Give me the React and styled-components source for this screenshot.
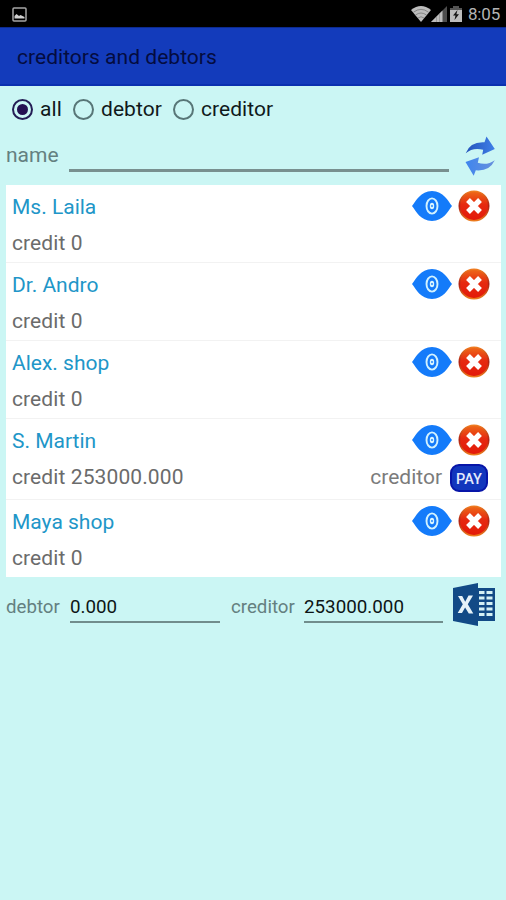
import { useState } from "react";
import styled, { createGlobalStyle } from "styled-components";

const GlobalStyle = createGlobalStyle`
  * {
    box-sizing: border-box;
  }

  body {
    margin: 0;
    background: #cbf6f4;
    font-family: Roboto, "Liberation Sans", sans-serif;
  }

  svg {
    display: block;
    flex: none;
  }
`;

const Screen = styled.div`
  width: 506px;
  min-height: 900px;
  background: #cbf6f4;
`;

const StatusBar = styled.div`
  display: flex;
  align-items: center;
  justify-content: space-between;
  height: 27px;
  padding: 1px 6px 0 12px;
  background: #000;
`;

const StatusIcons = styled.div`
  display: flex;
  align-items: center;
`;

const Clock = styled.span`
  width: 32px;
  margin-left: 6px;
  color: #b4b4b4;
  font-size: 17px;
  letter-spacing: -0.2px;
  line-height: 26px;
  white-space: nowrap;
`;

const AppBar = styled.header`
  height: 59px;
  padding: 1px 17px 0;
  background: #133bbb;
  border-top: 1px solid #0c2a90;
  border-bottom: 2px solid #0a30b0;
`;

const Title = styled.h1`
  margin: 0;
  color: #040c40;
  font-size: 21px;
  font-weight: 400;
  letter-spacing: 0.03px;
  line-height: 57px;
`;

const Filters = styled.div`
  display: flex;
  height: 46px;
  padding: 0 0 0 12px;
`;

const Option = styled.label`
  display: flex;
  align-items: center;
  width: ${(props) => props.$width};
  gap: 7px;
  color: #10191b;
  font-size: 21px;
  letter-spacing: 0.05px;
  white-space: nowrap;
`;

const RadioInput = styled.input`
  appearance: none;
  display: grid;
  place-items: center;
  flex: none;
  width: 21px;
  height: 21px;
  margin: 0;
  border: 2px solid #587677;
  border-radius: 50%;

  &:checked {
    border-color: #241d55;
  }

  &:checked::before {
    content: "";
    width: 11px;
    height: 11px;
    border-radius: 50%;
    background: #241052;
  }
`;

const SearchRow = styled.div`
  display: flex;
  height: 53px;
  padding: 0 11px 0 6px;
`;

const FieldLabel = styled.label`
  width: ${(props) => props.$width};
  color: #648080;
  font-size: ${(props) => props.$size};
  line-height: ${(props) => props.$line};
  white-space: nowrap;
`;

const SearchInput = styled.input`
  width: 380px;
  height: 40px;
  margin: 0 15px 0 0;
  padding: 0;
  border: 0;
  border-bottom: 3px solid #78908f;
  outline: 0;
  background: transparent;
  font: 21px Roboto, sans-serif;
`;

const IconButton = styled.button`
  display: block;
  height: fit-content;
  margin: ${(props) => props.$margin || "0"};
  padding: 0;
  border: 0;
  background: none;
`;

const List = styled.ul`
  margin: 0 5px 0 6px;
  padding: 0;
  list-style: none;
  background: #fff;
`;

const Row = styled.li`
  height: ${(props) => (props.$payable ? "81px" : "78px")};
  padding: 5px 11px 0 6px;
  border-bottom: 1px solid #f2f2f2;

  &:last-child {
    height: 77px;
    border-bottom: 0;
  }
`;

const Line = styled.div`
  display: flex;
  align-items: center;
  height: ${(props) => props.$height};
`;

const Name = styled.span`
  flex: 1;
  padding-top: 1px;
  color: #2196c8;
  font-size: 21px;
`;

const Credit = styled.span`
  flex: 1;
  color: #6b6b6b;
  font-size: 21px;
  letter-spacing: 0.1px;
`;

const Kind = styled.span`
  margin-right: 8px;
  color: #7b7b7b;
  font-size: 21px;
`;

const PayButton = styled.button`
  width: 38px;
  height: 28px;
  margin: 2px 2px 0 0;
  padding: 2px 0 0;
  border: 2px solid #0715a8;
  border-radius: 9px;
  background: #1236bd;
  color: #e4eafc;
  font: 500 14.5px Roboto, sans-serif;
`;

const Totals = styled.footer`
  display: flex;
  height: 56px;
  padding: 6px 10px 0 6px;
`;

const TotalInput = styled.input`
  width: ${(props) => props.$width};
  height: 40px;
  margin: 0 ${(props) => props.$gap} 0 0;
  padding: 10px 0 0;
  border: 0;
  border-bottom: 2px solid #718d8c;
  border-radius: 0;
  outline: 0;
  background: transparent;
  color: #0d1516;
  font: 18.8px Roboto, sans-serif;
`;

const PictureIcon = () => (
  <svg width="15" height="15" viewBox="0 0 15 15">
    <rect x="1" y="1" width="13" height="13" rx="1" fill="none" stroke="#a5a5a5" strokeWidth="1.5" />
    <path d="M2.5 11.5V9l2-2 2.5 2 1.5-1 4 2v1.5z" fill="#d0d0d0" />
  </svg>
);

const WifiIcon = () => (
  <svg width="20" height="16" viewBox="0 0 20 16">
    <path d="M0 4Q10-4 20 4L10 16Z" fill="#bdbdbd" />
    <path d="M2.5 6.2Q10 .5 17.5 6.2M4.5 9Q10 5 15.5 9M7 12Q10 9.5 13 12" fill="none" stroke="#777" strokeWidth="0.8" />
  </svg>
);

const SignalIcon = () => (
  <svg width="17" height="16" viewBox="0 0 17 16">
    <path d="M0 16 16 0V16Z" fill="#4d4d4d" />
    <path d="M0 16 11.5 4.5V16Z" fill="#bdbdbd" />
    <path d="M5.5 11V16M8.5 8V16" stroke="#888" strokeWidth="0.6" />
  </svg>
);

const BatteryIcon = () => (
  <svg width="12" height="16" viewBox="0 0 12 16">
    <path d="M3 0H9V2H12V16H0V2H3Z" fill="#bdbdbd" />
    <path d="M3 0H9V2H12V4H0V2H3Z" fill="#555" />
    <path d="M7.5 4 3 9.5H5.5L4.5 14 9 8.3H6.4Z" fill="#151515" />
  </svg>
);

const RefreshIcon = () => (
  <svg width="30" height="40" viewBox="0 0 30 40">
    <defs>
      <linearGradient id="refreshTop" x1="0" x2="1">
        <stop offset="0" stopColor="#2353bb" />
        <stop offset="1" stopColor="#4080e8" />
      </linearGradient>
      <linearGradient id="refreshBottom" x1="0" x2="1">
        <stop offset="0" stopColor="#3e85ee" />
        <stop offset="1" stopColor="#6991dc" />
      </linearGradient>
    </defs>
    <path d="M0.7 17.3Q5 5.5 19.5 6.3L21.5 0.5 29.8 13 17.2 18.7 18.2 13.8Q8 11 0.7 17.3Z" fill="url(#refreshTop)" />
    <path d="M29.8 24.2Q22 29.8 12.8 26.8L14 21.2 0.5 26 8.7 39.8 10.8 34.3Q24.5 35.5 29.8 24.2Z" fill="url(#refreshBottom)" />
  </svg>
);

const EyeIcon = () => (
  <svg width="40" height="32" viewBox="0 0 40 32">
    <path d="M0 16C4 11 8.5 1 20 1S36 11 40 16C36 21 31.5 31 20 31S4 21 0 16Z" fill="#147bfa" />
    <ellipse cx="20" cy="16" rx="5.5" ry="7.6" fill="none" stroke="#d2f2ff" strokeWidth="1.9" />
    <ellipse cx="20" cy="16" rx="2.2" ry="3.2" fill="#d8f4ff" />
    <circle cx="20" cy="16" r="0.9" fill="#147bfa" />
  </svg>
);

const DeleteIcon = () => (
  <svg width="32" height="32" viewBox="0 0 32 32">
    <defs>
      <linearGradient id="deleteFill" x1="0" y1="0" x2="0" y2="1">
        <stop offset="0" stopColor="#ee6a18" />
        <stop offset="0.45" stopColor="#e62a10" />
        <stop offset="1" stopColor="#e31808" />
      </linearGradient>
      <linearGradient id="deleteRing" x1="0" y1="0" x2="0" y2="1">
        <stop offset="0" stopColor="#ef7b20" />
        <stop offset="0.5" stopColor="#ad2015" />
        <stop offset="1" stopColor="#ec7b1d" />
      </linearGradient>
    </defs>
    <circle cx="16" cy="16" r="14.7" fill="url(#deleteFill)" stroke="url(#deleteRing)" strokeWidth="1.6" />
    <path d="M10 10 22 22M22 10 10 22" stroke="#fff" strokeWidth="5.4" />
  </svg>
);

const ExcelIcon = () => (
  <svg width="43" height="43" viewBox="0 0 43 43">
    <path d="M24 5H42V38H24Z" fill="#124a86" />
    <path d="M26 9.5H31.5M33.5 9.5H39.5M26 15H31.5M33.5 15H39.5M26 20.5H31.5M33.5 20.5H39.5M26 26H31.5M33.5 26H39.5M26 31.5H31.5M33.5 31.5H39.5" stroke="#d5f1f5" strokeWidth="3" />
    <path d="M0 5 25 0V43L0 38Z" fill="#124a86" />
    <path d="M5 13H9.2L12.2 18.7 15.5 12.6H20L14.8 21.3 20.3 30.6H15.8L12.1 24.4 9 30H4.7L9.8 21.3Z" fill="#e6f2f8" />
  </svg>
);

const accounts = [
  { name: "Ms. Laila", credit: "0" },
  { name: "Dr. Andro", credit: "0" },
  { name: "Alex. shop", credit: "0" },
  { name: "S. Martin", credit: "253000.000", kind: "creditor" },
  { name: "Maya shop", credit: "0" },
];

const filters = [
  { value: "all", width: "61px" },
  { value: "debtor", width: "100px" },
  { value: "creditor", width: "110px" },
];

const AccountRow = ({ account }) => (
  <Row $payable={Boolean(account.kind)}>
    <Line $height="32px">
      <Name>{account.name}</Name>
      <IconButton aria-label="view" $margin="0 6px 0 0">
        <EyeIcon />
      </IconButton>
      <IconButton aria-label="delete">
        <DeleteIcon />
      </IconButton>
    </Line>
    <Line $height="42px">
      <Credit>credit {account.credit}</Credit>
      {account.kind && (
        <>
          <Kind>{account.kind}</Kind>
          <PayButton>PAY</PayButton>
        </>
      )}
    </Line>
  </Row>
);

const App = () => {
  const [filter, setFilter] = useState("all");

  return (
    <Screen>
      <GlobalStyle />
      <StatusBar>
        <PictureIcon />
        <StatusIcons>
          <WifiIcon />
          <SignalIcon />
          <IconButton as="span" $margin="0 0 0 2px">
            <BatteryIcon />
          </IconButton>
          <Clock>8:05</Clock>
        </StatusIcons>
      </StatusBar>
      <AppBar>
        <Title>creditors and debtors</Title>
      </AppBar>
      <Filters>
        {filters.map(({ value, width }) => (
          <Option key={value} $width={width}>
            <RadioInput
              type="radio"
              name="filter"
              checked={filter === value}
              onChange={() => setFilter(value)}
            />
            {value}
          </Option>
        ))}
      </Filters>
      <SearchRow>
        <FieldLabel htmlFor="name" $width="63px" $size="21px" $line="47px">
          name
        </FieldLabel>
        <SearchInput id="name" />
        <IconButton aria-label="refresh" $margin="4px 0 0 1px">
          <RefreshIcon />
        </IconButton>
      </SearchRow>
      <List>
        {accounts.map((account) => (
          <AccountRow key={account.name} account={account} />
        ))}
      </List>
      <Totals>
        <FieldLabel $width="64px" $size="18.7px" $line="49px">
          debtor
        </FieldLabel>
        <TotalInput $width="150px" $gap="11px" value="0.000" readOnly />
        <FieldLabel $width="73px" $size="18.7px" $line="49px">
          creditor
        </FieldLabel>
        <TotalInput $width="139px" $gap="10px" value="253000.000" readOnly />
        <ExcelIcon />
      </Totals>
    </Screen>
  );
};

export default App;
